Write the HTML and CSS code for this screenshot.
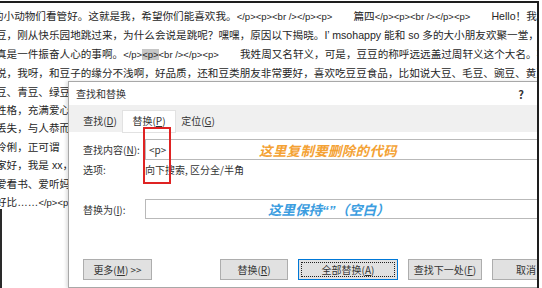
FILE: index.html
```html
<!DOCTYPE html>
<html lang="zh-CN">
<head>
    <meta charset="UTF-8">
    <title>查找和替换</title>
    <link rel="stylesheet" href="styles.css">
</head>
<body>
    <div class="screen">
        <!-- document text behind the dialog -->
        <div class="doc">
            <div class="line first">的小动物们看管好。这就是我，希望你们能喜欢我。<span class="t">&lt;/p&gt;&lt;p&gt;&lt;br /&gt;&lt;/p&gt;&lt;p&gt;</span>　　篇四<span class="t">&lt;/p&gt;&lt;p&gt;&lt;br /&gt;&lt;/p&gt;&lt;p&gt;</span>　　Hello！我是</div>
            <div class="line">豆，刚从快乐园地跳过来，为什么会说是跳呢？嘿嘿，原因以下揭晓。I’ msohappy 能和 so 多的大小朋友欢聚一堂，</div>
            <div class="line">真是一件振奋人心的事啊。<span class="t">&lt;/p&gt;<span class="hl">&lt;p&gt;</span>&lt;br /&gt;&lt;/p&gt;&lt;p&gt;</span>　　我姓周又名轩义，可是，豆豆的称呼远远盖过周轩义这个大名。不</div>
            <div class="line">说，我呀，和豆子的缘分不浅啊，好品质，还和豆类朋友非常要好，喜欢吃豆豆食品，比如说大豆、毛豆、豌豆、黄豆</div>
            <div class="line">豆、青豆、绿豆、红豆</div>
            <div class="line">性格，充满爱心，</div>
            <div class="line">丢失，与人恭而有</div>
            <div class="line">伶俐，正可谓</div>
            <div class="line">家好，我是 xx，</div>
            <div class="line">爱看书、爱听妈妈</div>
            <div class="line">好比……<span class="t">&lt;/p&gt;&lt;p&gt;</span></div>
        </div>

        <!-- find and replace dialog -->
        <div class="dialog">
            <div class="title">
                <span>查找和替换</span>
                <span class="help">?</span>
            </div>
            <div class="tabs">
                <div class="tab">查找(<u>D</u>)</div>
                <div class="tab on">替换(<u>P</u>)</div>
                <div class="tab">定位(<u>G</u>)</div>
            </div>
            <div class="body">
                <div class="row">
                    <div class="label">查找内容(<u>N</u>):</div>
                    <div class="field">
                        <span class="val">&lt;p&gt;</span>
                        <span class="note orange">这里复制要删除的代码</span>
                    </div>
                </div>
                <div class="row opts">
                    <div class="label">选项:</div>
                    <div>向下搜索, 区分全/半角</div>
                </div>
                <div class="row rep">
                    <div class="label">替换为(<u>I</u>):</div>
                    <div class="field short">
                        <span class="note blue">这里保持“”（空白）</span>
                    </div>
                </div>
                <div class="buttons">
                    <div class="btn more">更多(<u>M</u>) &gt;&gt;</div>
                    <div class="btn one">替换(<u>R</u>)</div>
                    <div class="btn all">全部替换(<u>A</u>)</div>
                    <div class="btn next">查找下一处(<u>F</u>)</div>
                    <div class="btn cancel">取消</div>
                </div>
            </div>
            <div class="mark"></div>
        </div>
    </div>
</body>
</html>
```

FILE: styles.css
```css
body {
    margin: 0;
    background: #fff;
    font-family: "Noto Sans CJK SC", "Noto Sans", sans-serif;
}

.screen {
    position: relative;
    margin-top: 1px;
    width: 537px;
    height: 285px;
    border-top: 2px solid #1e1e1e;
    border-right: 2px solid #1e1e1e;
    background: #fff;
    overflow: hidden;
}

/* dark window edge at the lower left */
.screen::before {
    content: "";
    position: absolute;
    left: 0;
    top: 206px;
    width: 2px;
    bottom: 0;
    background: #2a2a2a;
}

.doc {
    padding-top: 4px;
    margin-left: -4px;
    font-family: "Liberation Sans", "Noto Sans CJK SC", sans-serif;
    font-size: 10.6px;
    line-height: 18.4px;
    color: #262626;
}

.line {
    white-space: nowrap;
}

.line.first {
    margin-left: -3px;
}

/* html tags in the text look smaller */
.t {
    font-size: 9.5px;
}

.hl {
    background: #c6c6c6;
}

.dialog {
    position: absolute;
    left: 68px;
    top: 78px;
    width: 490px;
    height: 205px;
    background: #fff;
    border: 1px solid #a8a8a8;
    box-shadow: -2px 0 3px rgba(0,0,0,0.12);
    font-size: 10px;
    color: #333;
}

.title {
    height: 23px;
    display: flex;
    align-items: center;
    justify-content: space-between;
    padding: 0 35px 0 7px;
}

.help {
    font-weight: bold;
    font-size: 11px;
}

.tabs {
    height: 27px;
    background: #f0f0f0;
    display: flex;
    align-items: flex-end;
    padding-left: 8px;
}

.tab {
    width: 46px;
    height: 21px;
    line-height: 20px;
    text-align: center;
}

.tab.on {
    width: 52px;
    background: #fff;
    box-shadow: 0 0 0 1px #e2e2e2;
}

.body {
    padding-left: 14px;
}

.row {
    display: flex;
    align-items: center;
}

.row:first-child {
    margin-top: 7px;
}

.label {
    width: 62px;
    flex: none;
}

.field {
    flex: 1;
    height: 21px;
    display: flex;
    align-items: center;
    padding-left: 3px;
    border: 1px solid #b9b9b9;
    border-right: none;
    box-sizing: border-box;
}

.field.short {
    height: 20px;
}

.val {
    width: 110px;
}

.note {
    font-size: 13.5px;
    font-weight: bold;
    font-style: italic;
}

.orange {
    color: #f4a234;
    letter-spacing: 0.3px;
}

.blue {
    color: #3b9de0;
    margin-left: 119px;
    font-family: "Liberation Sans", "Noto Sans CJK SC", sans-serif;
}

.opts {
    height: 18px;
}

.rep {
    margin-top: 21px;
}

.buttons {
    display: flex;
    gap: 10px;
    margin-top: 40px;
}

.btn {
    height: 21px;
    flex: none;
    display: flex;
    align-items: center;
    justify-content: center;
    background: #e1e1e1;
    border: 1px solid #adadad;
    box-sizing: border-box;
}

.more { width: 69px; margin-right: 58px; }
.one { width: 68px; }
.all {
    width: 100px;
    border-color: #0078d7;
    outline: 1px dotted #222;
    outline-offset: -4px;
}
.next { width: 74px; }
.cancel { width: 68px; }

.mark {
    position: absolute;
    left: 74px;
    top: 45px;
    width: 28px;
    height: 57px;
    box-sizing: border-box;
    border: 2px solid #df2323;
}
```
